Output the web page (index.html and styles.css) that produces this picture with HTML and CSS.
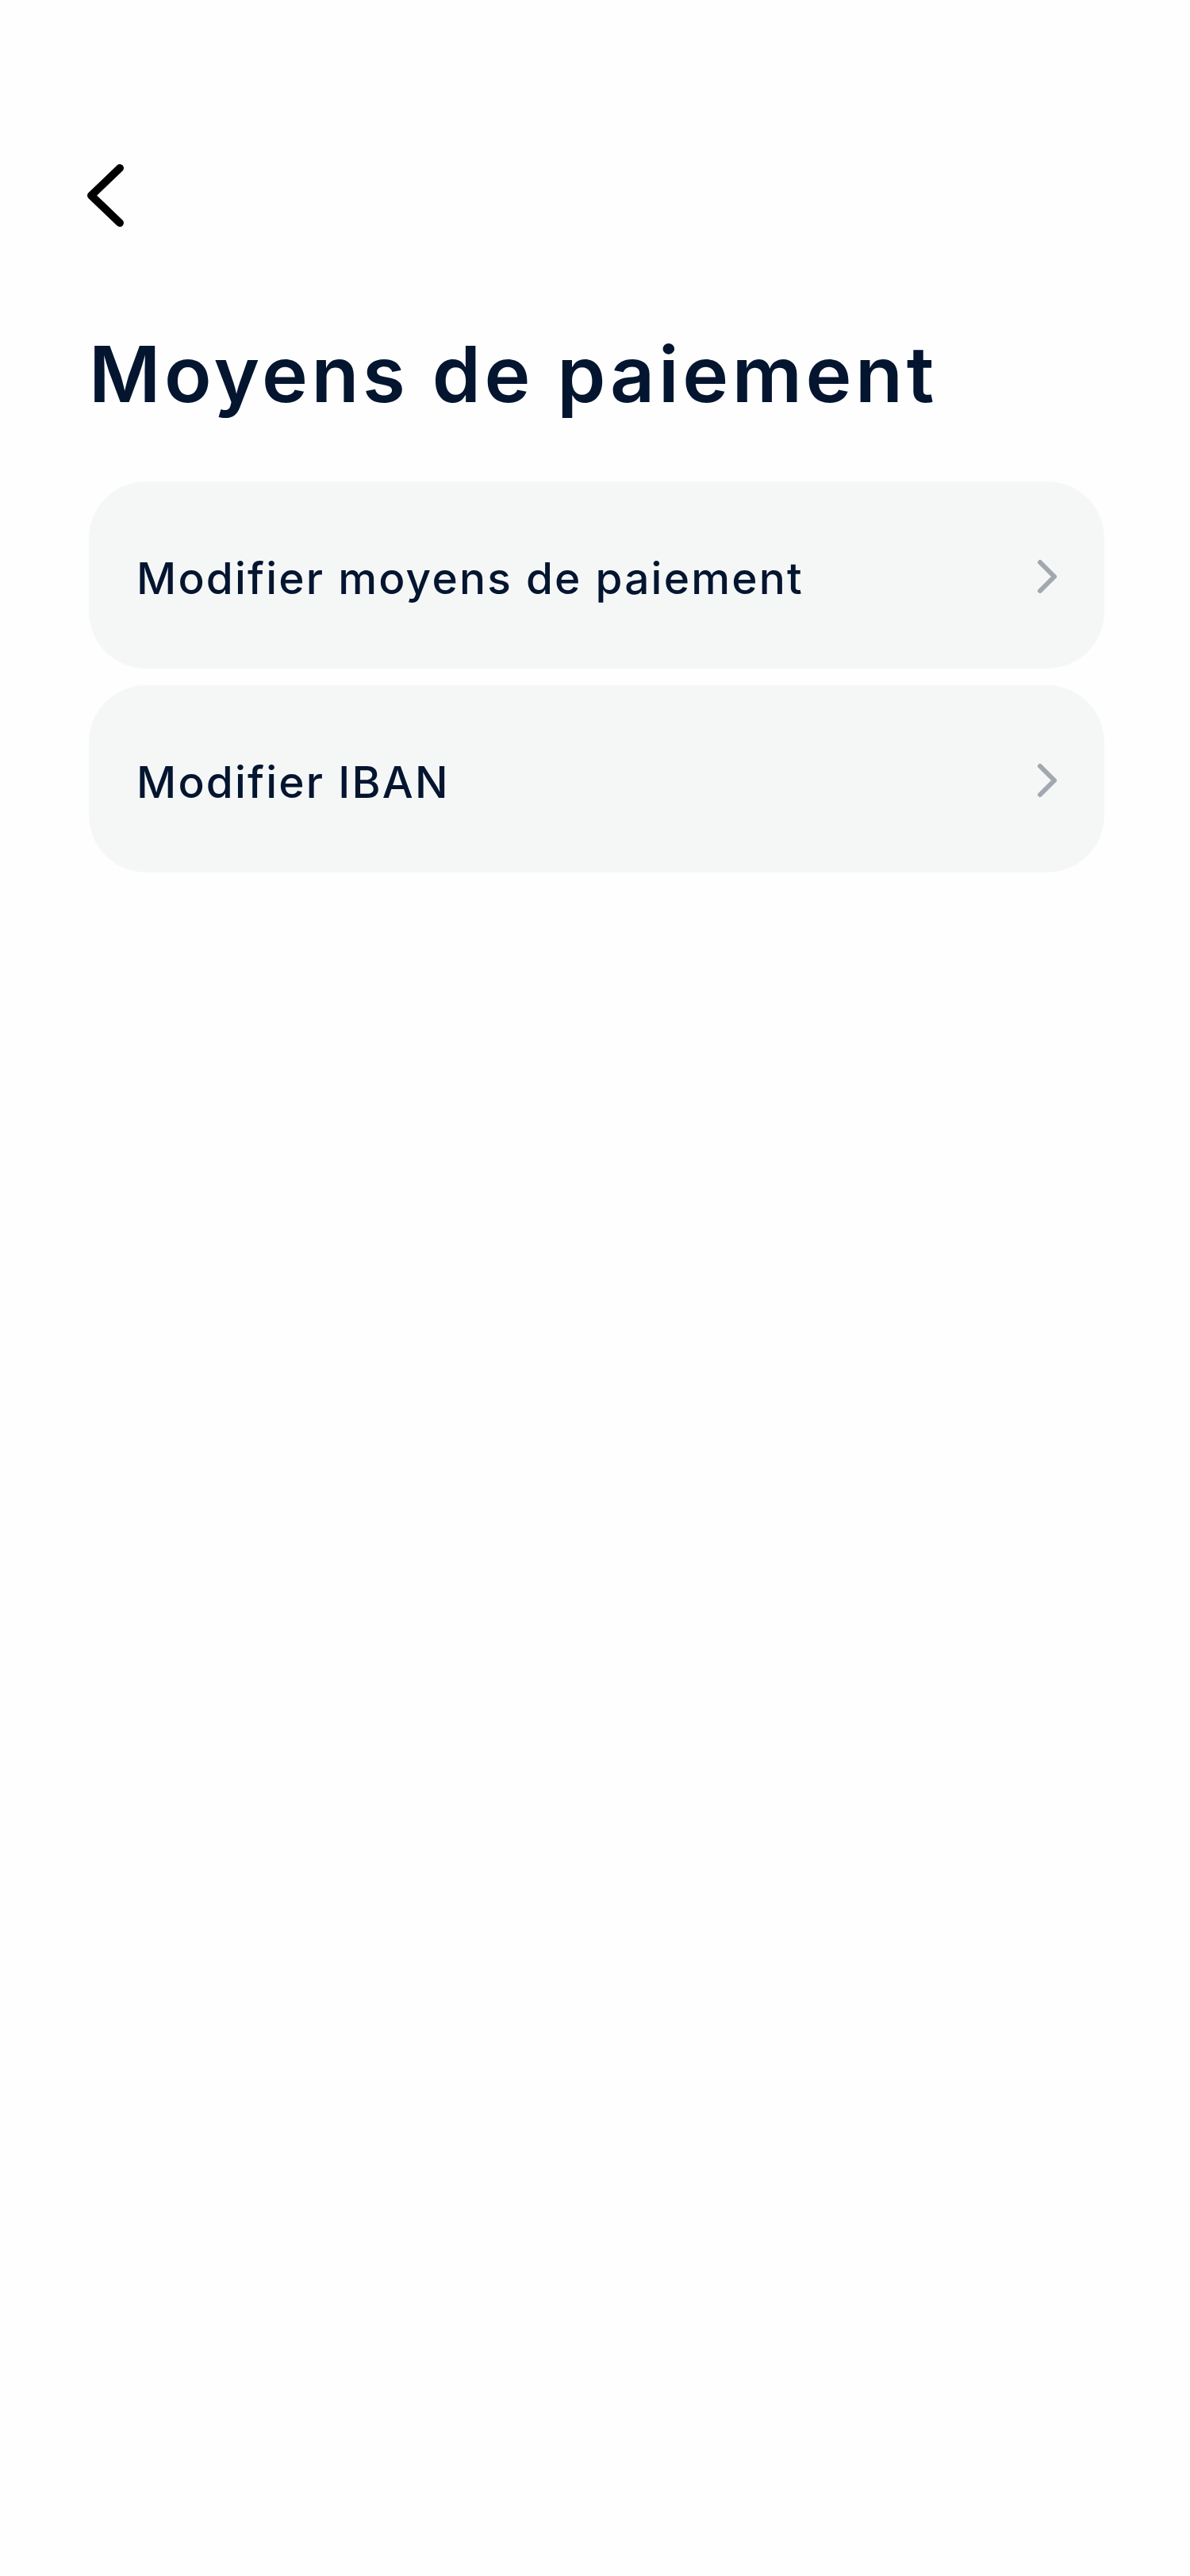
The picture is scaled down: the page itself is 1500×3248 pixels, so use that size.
FILE: index.html
```html
<!DOCTYPE html>
<html lang="fr">
<head>
<meta charset="utf-8">
<title>Moyens de paiement</title>
<link rel="stylesheet" href="styles.css">
</head>
<body>
<main class="page">
  <header class="topbar">
    <button class="back" aria-label="Retour">
      <svg width="60" height="96" viewBox="0 0 60 96" aria-hidden="true">
        <path d="M48 13 L12 47.5 L48 82" fill="none" stroke="#000" stroke-width="10" stroke-linecap="round" stroke-linejoin="round"/>
      </svg>
    </button>
  </header>
  <h1 class="title">Moyens de paiement</h1>
  <ul class="menu">
    <li class="item">
      <span class="label">Modifier moyens de paiement</span>
      <svg class="chev" width="30" height="48" viewBox="0 0 30 48" aria-hidden="true">
        <path d="M6 6 L24 24 L6 42" fill="none" stroke="#a3a8b0" stroke-width="6" stroke-linecap="round" stroke-linejoin="round"/>
      </svg>
    </li>
    <li class="item">
      <span class="label">Modifier IBAN</span>
      <svg class="chev" width="30" height="48" viewBox="0 0 30 48" aria-hidden="true">
        <path d="M6 6 L24 24 L6 42" fill="none" stroke="#a3a8b0" stroke-width="6" stroke-linecap="round" stroke-linejoin="round"/>
      </svg>
    </li>
  </ul>
</main>
</body>
</html>
```
FILE: styles.css
```css
* { box-sizing: border-box; }
html, body { margin: 0; padding: 0; background: #fefefe; }
body {
  font-family: "Inter", "Noto Sans", sans-serif;
  color: #041530;
}
.page {
  padding: 0 108px 0 112px;
  min-height: 3248px;
}
.topbar {
  display: flex;
  padding-top: 199px;
}
.back {
  display: block;
  margin: 0 0 0 -9px;
  padding: 0;
  border: 0;
  background: none;
  width: 60px;
  height: 96px;
}
.back svg { display: block; }
.title {
  margin: 117px 0 0 0;
  font-size: 98px;
  line-height: 120px;
  font-weight: 600;
  letter-spacing: 4.6px;
  color: #041530;
}
.menu {
  list-style: none;
  margin: 75px 0 0 0;
  padding: 0;
  display: flex;
  flex-direction: column;
  gap: 21px;
}
.item {
  height: 236px;
  border-radius: 72px;
  background: #f5f7f7;
  display: flex;
  align-items: center;
  justify-content: space-between;
  padding: 8px 57px 0 60px;
}
.label {
  font-size: 55px;
  font-weight: 500;
  line-height: 70px;
  letter-spacing: 2.2px;
  color: #041530;
}
.chev { display: block; flex: none; margin-top: -4px; }
```
